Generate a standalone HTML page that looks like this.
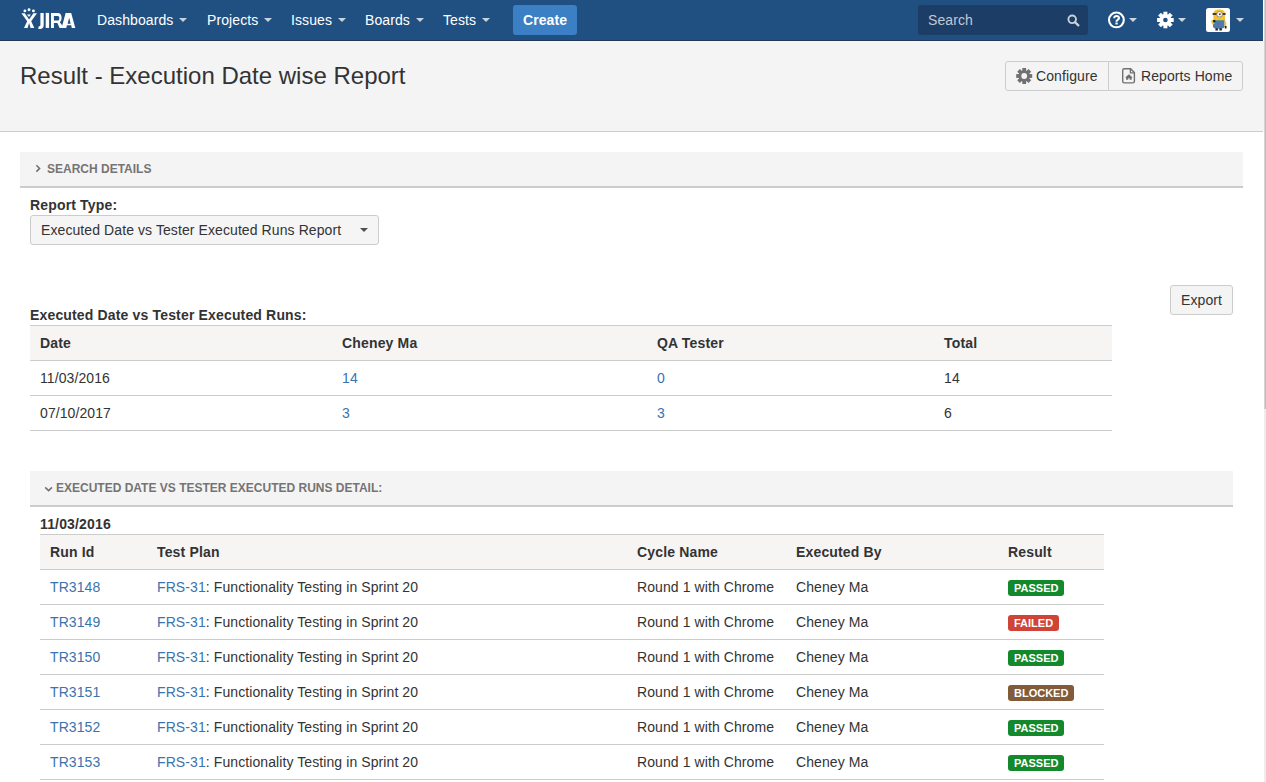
<!DOCTYPE html>
<html><head><meta charset="utf-8">
<style>
*{box-sizing:border-box;margin:0;padding:0}
html,body{width:1266px;height:782px;overflow:hidden;background:#fff}
body{font-family:"Liberation Sans",sans-serif;font-size:14px;color:#333;position:relative;letter-spacing:0.09px}
b,th,.bold{letter-spacing:0.16px}
.abs{position:absolute}
#hdr{position:absolute;left:0;top:0;width:1263px;height:41px;background:#205081;border-bottom:1px solid #22395a}
.nav{position:absolute;top:12px;color:#fff;font-size:14px;line-height:16px;white-space:nowrap}
.caret{display:inline-block;width:0;height:0;border-left:4px solid transparent;border-right:4px solid transparent;border-top:4px solid #c8d3e0;vertical-align:middle;margin-left:6px;position:relative;top:-1px}
#create{position:absolute;left:513px;top:5px;width:64px;height:30px;background:#3b7fc4;border-radius:3px;color:#fff;font-weight:bold;text-align:center;line-height:30px}
#search{position:absolute;left:918px;top:5px;width:170px;height:30px;background:#1c3d66;border-radius:3px;color:#c0c9d6;line-height:30px;padding-left:10px}
#phead{position:absolute;left:0;top:41px;width:1263px;height:91px;background:#f4f4f4;border-bottom:1px solid #ccc}
#title{position:absolute;left:20px;top:62px;font-size:24px;line-height:28px;color:#333;letter-spacing:0}
.btn{position:absolute;background:#f4f4f4;border:1px solid #ccc;border-radius:3px;color:#333;line-height:28px}
.sect{letter-spacing:0;position:absolute;background:#f4f4f4;border-bottom:2px solid #ccc;font-size:12px;font-weight:bold;color:#747474;text-transform:uppercase}
table{border-collapse:collapse;position:absolute}
td,th{text-align:left;font-size:14px;height:35px;border-bottom:1px solid #ccc;padding:0 10px;white-space:nowrap}
th{font-weight:bold;background:#f6f5f3;border-top:1px solid #ccc}
a{color:#3b73af;text-decoration:none}
.loz{display:inline-block;font-size:11px;font-weight:bold;color:#fff;border-radius:3px;padding:0 6px;line-height:16px;letter-spacing:0;vertical-align:middle;position:relative;top:0}
.pass{background:#14892c}.fail{background:#d04437}.blk{background:#815b3a}
</style></head><body>
<div id="hdr">
  <svg class="abs" style="left:0;top:0" width="80" height="40" viewBox="0 0 80 40">
  <g fill="#fff">
   <circle cx="24.9" cy="10.9" r="1.45"/><circle cx="29.05" cy="9.8" r="1.45"/><circle cx="33.4" cy="10.9" r="1.45"/>
   <path d="M21.4,13.2 L24.8,13.2 L29.1,19.5 L33.4,13.2 L37,13.2 L31.2,21.2 L34.3,27.9 L30.6,27.9 L29.1,23 L27.6,27.9 L24,27.9 L27.2,21.2 Z"/>
   <path d="M27,14.4 L30.9,14.4 L29,17 Z"/>
   <path d="M40.4,12.9 H43.7 V25 C43.7,27.6 42.3,28.9 40,28.9 L38.3,28.9 L38.7,26.3 C40,26.3 40.4,25.9 40.4,24.8 Z"/>
   <rect x="45.7" y="12.9" width="3.4" height="15"/>
   <path fill-rule="evenodd" d="M51,13.1 H58.3 C60.6,13.1 61.6,15.3 61.6,17.8 C61.6,20 60.8,21.6 59.8,22.3 L64.3,27.9 H59.6 L57.4,23 H53.9 V27.9 H51 Z M53.9,15.9 V20.6 H57.7 C59,20.6 59.3,19.4 59.3,18.2 C59.3,17 59,15.9 57.7,15.9 Z"/>
   <path fill-rule="evenodd" d="M65.6,13.1 H71.2 L75.3,27.9 H71.8 L71.2,25.3 H66.9 L66.3,27.9 H61.6 Z M67.6,23.8 H70.6 L69.2,17.8 Z"/>
  </g>
  </svg>
  <div class="nav" style="left:97px">Dashboards<span class="caret"></span></div>
  <div class="nav" style="left:207px">Projects<span class="caret"></span></div>
  <div class="nav" style="left:291px">Issues<span class="caret"></span></div>
  <div class="nav" style="left:365px">Boards<span class="caret"></span></div>
  <div class="nav" style="left:443px">Tests<span class="caret"></span></div>
  <div id="create">Create</div>
  <div id="search">Search</div>
  <svg class="abs" style="left:1060px;top:10px" width="24" height="20" viewBox="1060 10 24 20"><circle cx="1072.2" cy="19.3" r="3.8" fill="none" stroke="#c8d0da" stroke-width="1.9"/><path d="M1074.9,22 L1078.3,25.3" stroke="#c8d0da" stroke-width="2.4" stroke-linecap="round"/></svg>
  <svg class="abs" style="left:1100px;top:8px" width="40" height="24" viewBox="1100 8 40 24">
    <circle cx="1116.4" cy="19.9" r="7.4" fill="none" stroke="#fff" stroke-width="2.1"/>
    <path fill="#fff" d="M1113.2,18.2 C1113.2,16.2 1114.6,15.1 1116.6,15.1 C1118.6,15.1 1120,16.2 1120,18 C1120,19.6 1118.9,20.2 1118.1,20.7 C1117.6,21 1117.6,21.3 1117.6,21.8 H1115.5 C1115.5,20.6 1115.7,20.1 1116.6,19.5 C1117.4,19 1117.8,18.7 1117.8,18.1 C1117.8,17.4 1117.3,17 1116.6,17 C1115.8,17 1115.3,17.5 1115.3,18.3 Z M1115.4,22.6 H1117.7 V24.6 H1115.4 Z"/>
    <path d="M1129,18 H1137 L1133,22 Z" fill="#ccd5e0"/>
  </svg>
  <svg class="abs" style="left:1150px;top:8px" width="40" height="24" viewBox="1150 8 40 24">
    <g transform="translate(1165.4 20)" fill="#fff"><rect x="-2" y="-8.3" width="4" height="4" transform="rotate(0)"/><rect x="-2" y="-8.3" width="4" height="4" transform="rotate(45)"/><rect x="-2" y="-8.3" width="4" height="4" transform="rotate(90)"/><rect x="-2" y="-8.3" width="4" height="4" transform="rotate(135)"/><rect x="-2" y="-8.3" width="4" height="4" transform="rotate(180)"/><rect x="-2" y="-8.3" width="4" height="4" transform="rotate(225)"/><rect x="-2" y="-8.3" width="4" height="4" transform="rotate(270)"/><rect x="-2" y="-8.3" width="4" height="4" transform="rotate(315)"/><circle r="6"/><circle r="2.3" fill="#205081"/></g>
    <path d="M1178,18 H1186 L1182,22 Z" fill="#ccd5e0"/>
  </svg>
  <svg class="abs" style="left:1200px;top:4px" width="50" height="32" viewBox="1200 4 50 32">
    <rect x="1206" y="8" width="24" height="24" rx="2.5" fill="#fff"/>
    <path d="M1213.3,21 V14 C1213.3,11 1215.5,9.6 1219.2,9.6 C1222.9,9.6 1225,11 1225,14 V21 Z" fill="#f2c532"/>
    <rect x="1212.6" y="13.2" width="13" height="1.6" fill="#222"/>
    <circle cx="1219.6" cy="14.2" r="3.2" fill="#9a9a9a"/>
    <circle cx="1219.6" cy="14.2" r="2.2" fill="#fff"/>
    <circle cx="1219.8" cy="14.3" r="1" fill="#6b3a20"/>
    <path d="M1213,20.3 H1224.6 V26.5 C1224.6,28.3 1222.5,28.8 1218.8,28.8 C1215,28.8 1213,28.3 1213,26.5 Z" fill="#4d79ad"/>
    <path d="M1211,20.5 L1213.5,20 L1214.5,24 L1212,24.5 Z" fill="#f2c532"/>
    <path d="M1212.8,20.2 L1215.2,19.8 L1215.5,22 L1213.2,22.5 Z" fill="#222"/>
    <path d="M1224.4,21 L1226.2,21.5 L1226.3,27 L1224.6,27 Z" fill="#f2c532"/>
    <path d="M1224.8,26 L1226.5,26 L1226.5,28.5 L1224.8,28.5 Z" fill="#222"/>
    <rect x="1215.4" y="28.3" width="2.5" height="2.2" fill="#222"/><rect x="1219.4" y="28.3" width="2.5" height="2.2" fill="#222"/>
    <path d="M1236,18 H1244 L1240,22 Z" fill="#ccd5e0"/>
  </svg>
</div>
<div id="phead"></div>
<div id="title">Result - Execution Date wise Report</div>
<div class="btn" style="left:1005px;top:61px;width:104px;height:30px;border-radius:3px 0 0 3px;padding-left:30px">Configure</div>
<div class="btn" style="left:1108px;top:61px;width:135px;height:30px;border-radius:0 3px 3px 0;padding-left:32px">Reports Home</div>
<svg class="abs" style="left:1010px;top:64px" width="30" height="26" viewBox="1010 64 30 26">
  <g transform="translate(1024.2 76)" fill="#707070"><rect x="-1.9" y="-8" width="3.8" height="4" transform="rotate(0)"/><rect x="-1.9" y="-8" width="3.8" height="4" transform="rotate(45)"/><rect x="-1.9" y="-8" width="3.8" height="4" transform="rotate(90)"/><rect x="-1.9" y="-8" width="3.8" height="4" transform="rotate(135)"/><rect x="-1.9" y="-8" width="3.8" height="4" transform="rotate(180)"/><rect x="-1.9" y="-8" width="3.8" height="4" transform="rotate(225)"/><rect x="-1.9" y="-8" width="3.8" height="4" transform="rotate(270)"/><rect x="-1.9" y="-8" width="3.8" height="4" transform="rotate(315)"/><circle r="5.7"/><circle r="2.9" fill="#f4f4f4"/></g>
</svg>
<svg class="abs" style="left:1116px;top:64px" width="24" height="24" viewBox="1116 64 24 24">
  <path d="M1124.3,68.8 H1130.6 L1134.4,72.6 V81.2 C1134.4,82.3 1133.8,82.9 1132.7,82.9 H1124.3 C1123.2,82.9 1122.7,82.3 1122.7,81.2 V70.5 C1122.7,69.4 1123.2,68.8 1124.3,68.8 Z" fill="none" stroke="#707070" stroke-width="1.4"/>
  <path d="M1130.4,68.8 V72.8 H1134.4" fill="none" stroke="#707070" stroke-width="1.3"/>
  <path d="M1128.9,74.2 L1132.7,77.6 H1131.7 V79.8 H1129.6 V78.3 H1128.2 V79.8 H1126.1 V77.6 H1125.1 Z" fill="#707070"/>
</svg>

<div class="sect" style="left:20px;top:152px;width:1223px;height:36px;line-height:34px;padding-left:27px">Search Details</div>
<div class="abs bold" style="left:30px;top:197px;font-weight:bold">Report Type:</div>
<div class="btn" style="left:30px;top:215px;width:349px;height:30px;padding-left:10px;background:#f5f5f5">Executed Date vs Tester Executed Runs Report</div>

<div class="btn" style="left:1170px;top:285px;width:63px;height:30px;text-align:center">Export</div>
<div class="abs bold" style="left:30px;top:307px;font-weight:bold">Executed Date vs Tester Executed Runs:</div>
<table style="left:30px;top:325px;width:1082px">
<tr><th style="width:302px">Date</th><th style="width:315px">Cheney Ma</th><th style="width:287px">QA Tester</th><th>Total</th></tr>
<tr><td>11/03/2016</td><td><a>14</a></td><td><a>0</a></td><td>14</td></tr>
<tr><td>07/10/2017</td><td><a>3</a></td><td><a>3</a></td><td>6</td></tr>
</table>

<div class="sect" style="left:30px;top:471px;width:1203px;height:36px;line-height:35px;padding-left:26px">Executed Date vs Tester Executed Runs Detail:</div>
<div class="abs bold" style="left:40px;top:516px;font-weight:bold">11/03/2016</div>
<table style="left:40px;top:534px;width:1064px">
<tr><th style="width:107px">Run Id</th><th style="width:480px">Test Plan</th><th style="width:159px">Cycle Name</th><th style="width:212px">Executed By</th><th>Result</th></tr>
<tr><td><a>TR3148</a></td><td><a>FRS-31</a>: Functionality Testing in Sprint 20</td><td>Round 1 with Chrome</td><td>Cheney Ma</td><td><span class="loz pass">PASSED</span></td></tr>
<tr><td><a>TR3149</a></td><td><a>FRS-31</a>: Functionality Testing in Sprint 20</td><td>Round 1 with Chrome</td><td>Cheney Ma</td><td><span class="loz fail">FAILED</span></td></tr>
<tr><td><a>TR3150</a></td><td><a>FRS-31</a>: Functionality Testing in Sprint 20</td><td>Round 1 with Chrome</td><td>Cheney Ma</td><td><span class="loz pass">PASSED</span></td></tr>
<tr><td><a>TR3151</a></td><td><a>FRS-31</a>: Functionality Testing in Sprint 20</td><td>Round 1 with Chrome</td><td>Cheney Ma</td><td><span class="loz blk">BLOCKED</span></td></tr>
<tr><td><a>TR3152</a></td><td><a>FRS-31</a>: Functionality Testing in Sprint 20</td><td>Round 1 with Chrome</td><td>Cheney Ma</td><td><span class="loz pass">PASSED</span></td></tr>
<tr><td><a>TR3153</a></td><td><a>FRS-31</a>: Functionality Testing in Sprint 20</td><td>Round 1 with Chrome</td><td>Cheney Ma</td><td><span class="loz pass">PASSED</span></td></tr>
</table>
<svg class="abs" style="left:30px;top:160px" width="16" height="16" viewBox="30 160 16 16"><path d="M36.4,165.2 L39.6,168.4 L36.4,171.6" fill="none" stroke="#707070" stroke-width="1.5"/></svg>
<svg class="abs" style="left:40px;top:480px" width="16" height="16" viewBox="40 480 16 16"><path d="M45.2,487.4 L48.6,490.6 L52,487.4" fill="none" stroke="#707070" stroke-width="1.5"/></svg>
<svg class="abs" style="left:355px;top:222px" width="16" height="16" viewBox="355 222 16 16"><path d="M360,228 H368 L364,232 Z" fill="#505050"/></svg>
<div class="abs" style="left:1263px;top:41px;width:2px;height:90px;background:#f4f4f4"></div>
<div class="abs" style="left:1264px;top:409px;width:2px;height:373px;background:#ededed"></div>
<div class="abs" style="left:1264px;top:0;width:2px;height:409px;background:linear-gradient(90deg,#e0e0e0,#b0b0b0)"></div>
</body></html>
